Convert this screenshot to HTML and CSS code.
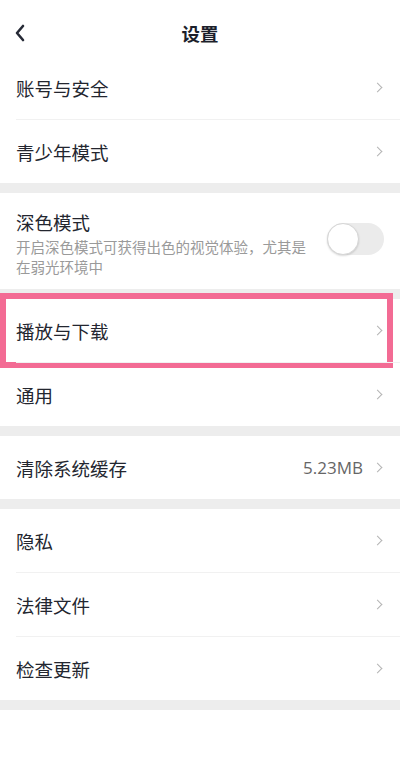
FILE: index.html
```html
<!DOCTYPE html>
<html lang="zh-CN">
<head>
  <meta charset="UTF-8" />
  <title>设置</title>
  <link rel="stylesheet" href="styles.css">
</head>
<body>

  <header class="topo">
    <svg class="voltar" width="12" height="18" viewBox="0 0 12 18">
      <path d="M9 2 L3 9 L9 16" fill="none" stroke="#262a36" stroke-width="2.6" stroke-linecap="round" stroke-linejoin="round"/>
    </svg>
    <h1>设置</h1>
  </header>

  <div class="grupo">
    <div class="linha">
      <span class="rotulo">账号与安全</span>
      <span class="seta"></span>
    </div>
    <div class="linha">
      <span class="rotulo">青少年模式</span>
      <span class="seta"></span>
    </div>
  </div>

  <div class="faixa"></div>

  <div class="grupo">
    <div class="linha escuro">
      <div class="textos">
        <div class="rotulo">深色模式</div>
        <div class="descricao">开启深色模式可获得出色的视觉体验，尤其是在弱光环境中</div>
      </div>
      <div class="chave"><span class="bolinha"></span></div>
    </div>
  </div>

  <div class="faixa"></div>

  <div class="grupo">
    <div class="linha destaque">
      <span class="rotulo">播放与下载</span>
      <span class="seta"></span>
    </div>
    <div class="linha">
      <span class="rotulo">通用</span>
      <span class="seta"></span>
    </div>
  </div>

  <div class="faixa"></div>

  <div class="grupo">
    <div class="linha">
      <span class="rotulo">清除系统缓存</span>
      <span class="valor">5.23MB</span>
      <span class="seta"></span>
    </div>
  </div>

  <div class="faixa"></div>

  <div class="grupo">
    <div class="linha">
      <span class="rotulo">隐私</span>
      <span class="seta"></span>
    </div>
    <div class="linha">
      <span class="rotulo">法律文件</span>
      <span class="seta"></span>
    </div>
    <div class="linha">
      <span class="rotulo">检查更新</span>
      <span class="seta"></span>
    </div>
  </div>

  <div class="faixa"></div>

</body>
</html>
```

FILE: styles.css
```css
body {
  font-family: "Noto Sans CJK SC", "Noto Sans", sans-serif;
  margin: 0;
  background-color: #ffffff;
  color: #23262f;
}

.topo {
  display: flex;
  align-items: center;
  justify-content: center;
  position: relative;
  height: 46px;
  padding-top: 10px;
}

.voltar {
  position: absolute;
  left: 14px;
  top: 24px;
}

.topo h1 {
  margin: 0;
  font-size: 18.5px;
  font-weight: bold;
  color: #1c1f2b;
}

.grupo {
  background-color: #fff;
}

.linha {
  display: flex;
  align-items: center;
  min-height: 63px;
  margin-left: 16px;
  padding-right: 16px;
  position: relative;
}

.linha + .linha {
  border-top: 1px solid #f1f1f1;
}

.rotulo {
  font-size: 18.5px;
  line-height: 26px;
  flex-grow: 1;
}

.valor {
  font-family: "Open Sans", Roboto, sans-serif;
  font-size: 17px;
  color: #666;
  margin-right: 11px;
}

.seta {
  width: 6px;
  height: 6px;
  border-top: 1.5px solid #b4b4b4;
  border-right: 1.5px solid #b4b4b4;
  transform: rotate(45deg);
  margin-right: 3px;
}

.faixa {
  height: 10px;
  background-color: #ededed;
}

.escuro {
  align-items: flex-start;
  padding-top: 16px;
  padding-bottom: 12px;
  min-height: 0;
}

.textos {
  flex-grow: 1;
  max-width: 300px;
}

.descricao {
  font-size: 14.5px;
  line-height: 20px;
  color: #9a9a9a;
  margin-top: 2px;
}

.chave {
  margin-left: auto;
  margin-top: 14px;
  width: 57px;
  height: 32px;
  border-radius: 16px;
  background-color: #ebebeb;
  position: relative;
}

.bolinha {
  position: absolute;
  left: 0;
  top: 0;
  width: 30px;
  height: 30px;
  border-radius: 50%;
  background-color: #fff;
  border: 1px solid #d6d6d6;
  box-shadow: 0 1px 2px rgba(0, 0, 0, 0.15);
}

.destaque::after {
  content: "";
  position: absolute;
  top: -6px;
  bottom: -6px;
  left: -16px;
  right: 7px;
  border: 6px solid #f36b94;
  pointer-events: none;
}
```
